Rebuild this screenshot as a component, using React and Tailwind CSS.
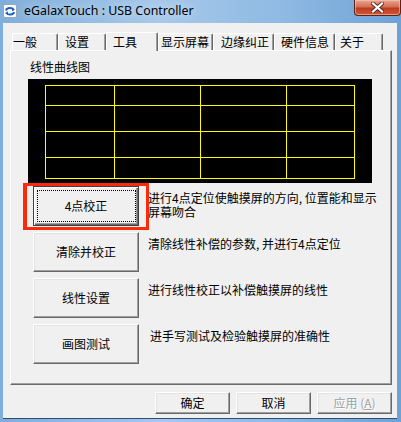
import React from "react";

const cjk = { fontFamily: '"Noto Sans CJK SC", "Noto Sans", sans-serif' };

const tabs = [
  { label: "一般", w: "w-[46px]", pl: "pl-0" },
  { label: "设置", w: "w-[48px]", pl: "pl-[6px]" },
  { label: "工具", w: "w-[52px]", pl: "pl-[6px]", active: true },
  { label: "显示屏幕", w: "w-[55px]", pl: "pl-[2px]" },
  { label: "边缘纠正", w: "w-[61px]", pl: "pl-[7px]" },
  { label: "硬件信息", w: "w-[61px]", pl: "pl-[6px]" },
  { label: "关于", w: "w-[48px]", pl: "pl-[4px]" },
];

const actions = [
  { label: "4点校正", text: ["进行4点定位使触摸屏的方向, 位置能和显示", "屏幕吻合"], focus: true },
  { label: "清除并校正", text: ["清除线性补偿的参数, 并进行4点定位"] },
  { label: "线性设置", text: ["进行线性校正以补偿触摸屏的线性"] },
  { label: "画图测试", text: ["进手写测试及检验触摸屏的准确性"], shift: true },
];

function AppIcon() {
  return (
    <svg width="16" height="16" viewBox="0 0 16 16" className="ml-[2px] mt-[3px] self-start">
      <rect x="1.5" y="1.5" width="13" height="13" rx="1.5" fill="#fff" stroke="#9aa6b4" />
      <path d="M4 7.5 A4 3 0 0 1 11.5 6.5" fill="none" stroke="#1f5fc8" strokeWidth="2" />
      <path d="M10 4.5 L13 6.8 L10 8.2 Z" fill="#1f5fc8" />
      <path d="M12 9 A4 3 0 0 1 4.5 10" fill="none" stroke="#1f5fc8" strokeWidth="2" />
      <path d="M6 8.2 L3 10.2 L6 11.8 Z" fill="#1f5fc8" />
    </svg>
  );
}

function CloseButton() {
  return (
    <div className="ml-auto flex h-[16px] w-[47px] items-center justify-center self-start rounded-b-[4px] border border-t-0 border-[#5c2418] bg-[linear-gradient(#e8a692_0%,#d46e55_45%,#bf3a1f_55%,#cf5a3a_100%)] shadow-[inset_0_0_0_1px_rgba(255,210,190,0.5)]">
      <svg width="13" height="11" viewBox="0 0 13 11">
        <path d="M2 1.5 L11 9.5 M11 1.5 L2 9.5" stroke="#5a2b22" strokeWidth="4" strokeLinecap="square" />
        <path d="M2 1.5 L11 9.5 M11 1.5 L2 9.5" stroke="#fff" strokeWidth="2.2" strokeLinecap="square" />
      </svg>
    </div>
  );
}

function Tab({ tab }) {
  if (tab.active) {
    return (
      <div
        className={`${tab.w} ${tab.pl} relative z-10 -mb-px flex h-[19px] items-start rounded-t-[2px] border border-b-0 border-t-white border-l-white border-r-[#696969] bg-[#f0f0f0] pt-[3px] text-[12px] leading-[12px] text-black shadow-[inset_-1px_0_#a0a0a0]`}
        style={cjk}
      >
        {tab.label}
      </div>
    );
  }
  return (
    <div
      className={`${tab.w} ${tab.pl} flex h-[17px] items-start rounded-t-[2px] border border-b-0 border-t-white border-l-white border-r-[#696969] bg-[#f0f0f0] pt-[2px] text-[12px] leading-[12px] text-black shadow-[inset_-1px_0_#a0a0a0]`}
      style={cjk}
    >
      {tab.label}
    </div>
  );
}

function Grid() {
  const xs = [0.5, 69.5, 155.5, 241.5, 309.5];
  const ys = [0.5, 20.5, 46.5, 72.5, 93.5];
  return (
    <svg width="310" height="94" className="ml-[17px] mt-[6px] block">
      {xs.map((x) => (
        <line key={"x" + x} x1={x} y1="0" x2={x} y2="94" stroke="#ffff00" strokeWidth="1" />
      ))}
      {ys.map((y) => (
        <line key={"y" + y} x1="0" y1={y} x2="310" y2={y} stroke="#ffff00" strokeWidth="1" />
      ))}
    </svg>
  );
}

function WinButton({ children, focus, className = "" }) {
  if (focus) {
    return (
      <div
        className={`relative flex items-center justify-center border border-[#3f3f3f] bg-[#f0f0f0] text-[12px] leading-[12px] text-black shadow-[inset_1px_1px_#fff,inset_-1px_-1px_#696969,inset_-2px_-2px_#a0a0a0] ${className}`}
        style={cjk}
      >
        <div className="absolute inset-y-[3px] left-[3px] right-[2px] border border-dotted border-black" />
        {children}
      </div>
    );
  }
  return (
    <div
      className={`flex items-center justify-center border border-t-white border-l-white border-r-[#696969] border-b-[#696969] bg-[#f0f0f0] text-[12px] leading-[12px] text-black shadow-[inset_-1px_-1px_#a0a0a0,inset_1px_1px_#e3e3e3] ${className}`}
      style={cjk}
    >
      {children}
    </div>
  );
}

export default function App() {
  return (
    <div className="flex h-[422px] w-[401px] flex-col overflow-hidden bg-[linear-gradient(90deg,#7faedb,#a6c8ea_40%,#8fbae3_70%,#6fa2d4)]">
      {/* title bar */}
      <div className="flex h-[23px] shrink-0 items-center">
        <AppIcon />
        <span
          className="ml-[6px] mt-[-1px] self-start pt-[4px] text-[12.4px] leading-[15px] text-black [text-shadow:0_0_8px_#e6f1fb]"
          style={{ fontFamily: '"Noto Sans", "Open Sans", sans-serif' }}
        >
          eGalaxTouch : USB Controller
        </span>
        <CloseButton />
      </div>

      {/* client */}
      <div className="ml-[3px] flex h-[396px] w-[394px] flex-col border-b border-[#2d4f77] bg-[#f0f0f0] pt-[9px]">
        <div className="ml-[7px] flex flex-col">
          <div className="flex h-[18px] items-end pl-[2px]">
            {tabs.map((t) => (
              <Tab key={t.label} tab={t} />
            ))}
          </div>

          <div className="flex h-[335px] w-[382px] flex-col border border-t-white border-l-white border-r-[#696969] border-b-[#696969] pl-[17px] pt-[10px] shadow-[inset_-1px_-1px_#a0a0a0]">
            <div className="ml-[2px] text-[12px] leading-[12px] text-black" style={cjk}>
              线性曲线图
            </div>
            <div className="mt-[6px] h-[104px] w-[344px] bg-black">
              <Grid />
            </div>

            <div className="mt-[3px] flex flex-col gap-[6px]">
              {actions.map((a) => (
                <div key={a.label} className="flex items-start">
                  <div className="relative ml-[5px]">
                    <WinButton focus={a.focus} className="h-[40px] w-[106px]">
                      {a.label}
                    </WinButton>
                    {a.focus && (
                      <div className="absolute -bottom-[4px] -left-[10px] -right-[10px] -top-[3px] border-[3px] border-l-4 border-[#fa2a0a]" />
                    )}
                  </div>
                  <div
                    className={`${a.shift ? "ml-[11px]" : "ml-[9px]"} mt-[5px] text-[12px] leading-[14px] text-black`}
                    style={cjk}
                  >
                    {a.text.map((line) => (
                      <div key={line} className="whitespace-nowrap">
                        {line}
                      </div>
                    ))}
                  </div>
                </div>
              ))}
            </div>
          </div>
        </div>

        <div className="mt-[7px] flex justify-end gap-[6px] pr-[5px]">
          <WinButton className="h-[22px] w-[75px]">确定</WinButton>
          <WinButton className="h-[22px] w-[75px]">取消</WinButton>
          <WinButton className="h-[22px] w-[75px]">
            <span className="text-[#a0a0a0] [text-shadow:1px_1px_0_#fff]">
              应用 (<span className="underline">A</span>)
            </span>
          </WinButton>
        </div>
      </div>
    </div>
  );
}
